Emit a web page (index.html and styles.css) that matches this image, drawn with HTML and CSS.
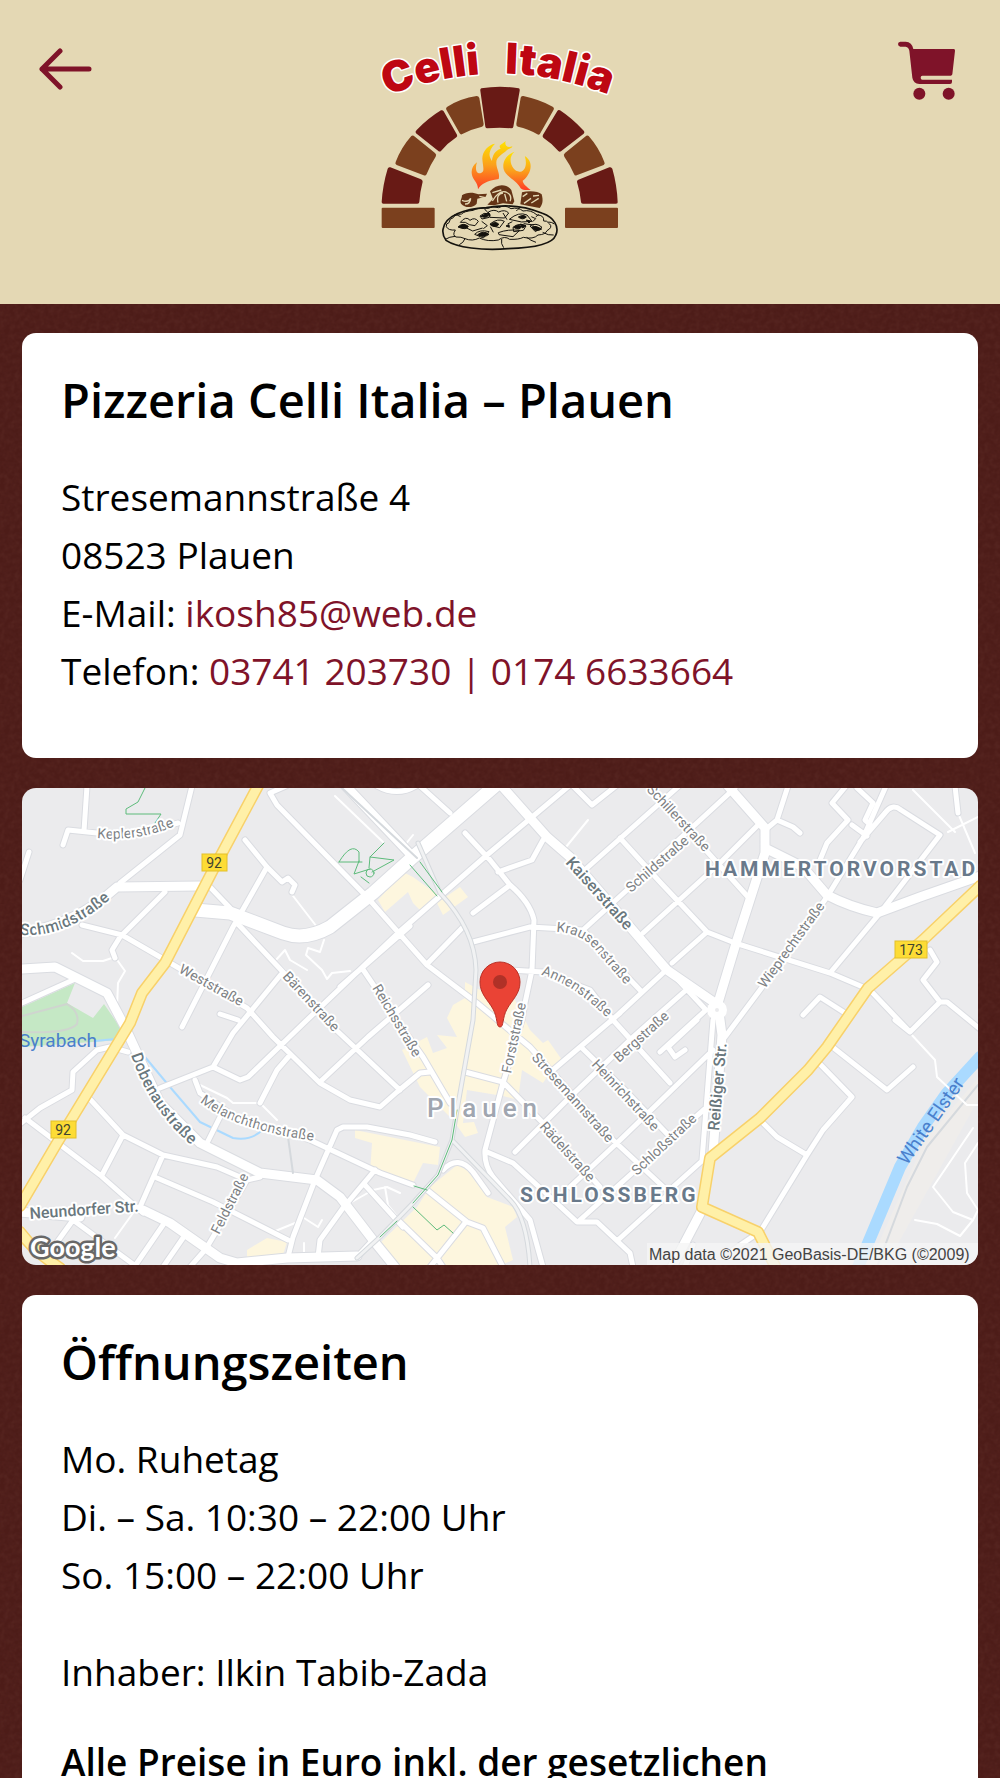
FILE: index.html
```html
<!DOCTYPE html>
<html lang="de">

<head>
    <meta charset="UTF-8" />
    <meta name="viewport" content="width=device-width, initial-scale=1.0" />
    <title>Pizzeria Celli Italia</title>
    <link rel="stylesheet" href="styles.css">
</head>

<body>
    <header class="header">
        <button class="icon-button" type="button" aria-label="Zurück">
            <svg width="54" height="44" viewBox="0 0 54 44">
                <path class="arrow" d="M51 21H4M22 3L4 21l18 18" />
            </svg>
        </button>

        <a class="logo" href="#" aria-label="Celli Italia">
            <svg width="280" height="250" viewBox="0 0 840 750">
                <defs>
                    <path id="arc" d="M82 228Q250 160 430 161Q600 161 820 252" />
                    <linearGradient id="fire" x1="0" y1="0" x2="0" y2="1">
                        <stop offset="0" stop-color="#ffe500" />
                        <stop offset=".5" stop-color="#fba01c" />
                        <stop offset="1" stop-color="#ff3d24" />
                    </linearGradient>
                </defs>
                <g class="logo-text">
                    <text><textPath href="#arc">Celli</textPath></text>
                    <text><textPath href="#arc" startOffset="362">Italia</textPath></text>
                </g>

                <!-- stones of the oven -->
                <g class="stone-red">
                    <path d="M364 205Q420 195 476 205Q480 206 479 212L460 320Q459 325 454 325Q420 322 382 325Q377 325 376 320L361 212Q360 207 364 205Z" />
                    <path d="M170 330Q205 294 243 271Q248 269 251 274L291 344Q293 349 289 352Q262 370 243 393Q239 396 235 393L168 340Q164 336 170 330Z" />
                    <path d="M669 330Q635 294 600 271Q595 268 592 273L549 344Q546 349 550 353Q577 371 595 393Q599 397 603 394L671 341Q676 336 669 330Z" />
                    <path d="M91 442L183 478Q188 480 188 485Q180 515 178 546Q178 551 172 551H70Q65 551 65 546Q68 495 83 446Q85 440 91 442Z" />
                    <path d="M748 442L655 479Q650 481 651 486Q660 515 663 546Q663 551 669 551H768Q774 551 773 546Q771 495 757 446Q754 440 748 442Z" />
                </g>
                <g class="stone-brown">
                    <path d="M262 260Q302 235 350 228Q356 228 358 234L371 312Q371 319 366 320Q335 327 307 342Q302 345 299 340L259 269Q256 263 262 260Z" />
                    <path d="M578 260Q538 238 490 228Q483 227 482 233L469 311Q468 318 474 320Q505 326 532 343Q537 346 540 341L581 269Q584 263 578 260Z" />
                    <path d="M154 348Q157 345 161 347L225 399Q231 404 227 410Q211 434 200 462Q198 468 191 466L110 435Q104 432 107 426Q123 383 154 348Z" />
                    <path d="M686 348Q683 345 679 347L615 399Q609 404 613 410Q630 434 642 462Q644 468 650 466L731 435Q736 432 733 426Q717 383 686 348Z" />
                    <rect x="65" y="563" width="159" height="61" rx="3" />
                    <rect x="615" y="563" width="159" height="61" rx="3" />
                </g>

                <!-- fire -->
                <g fill="url(#fire)">
                    <path d="M405 371C385 374 366 395 367 417C369 442 375 455 363 459C347 463 345 444 351 427C334 439 329 460 343 480C352 493 354 499 354 508C364 491 381 482 416 477C421 459 409 448 409 428C408 410 430 402 441 390C452 384 457 384 457 379C445 384 432 380 437 362C429 373 412 374 422 386C405 391 397 407 396 423C384 407 386 391 405 371Z" />
                    <path d="M464 395C438 404 426 426 431 448C436 470 469 478 482 505C490 512 500 510 512 510C502 501 490 494 488 482C507 468 521 438 505 418C499 410 493 406 495 410C501 431 497 452 481 455C458 458 438 415 464 395Z" />
                </g>

                <!-- logs -->
                <g class="log">
                    <path d="M306 526C317 516 341 516 355 523L381 521L377 530L352 536L350 551C340 564 314 565 304 552C298 544 306 536 306 526Z" />
                    <path d="M390 514C409 490 440 490 454 510L463 544L458 553L429 550L402 556L382 554L399 537Z" />
                    <path d="M486 517C506 512 535 513 545 523C550 541 548 555 539 564L503 557L481 553Z" />
                </g>
                <path class="log-line" d="M306 541q18 8 26 -6q-2 18-17 17M358 529l18 4M397 518l27-8M397 543q20-33 41-27q20 9 12 28M414 548q-6-26 15-29M434 522l6 22M488 530l14-10M492 550l21-15M514 549l22-14M519 528l18-2" />

                <!-- pizza -->
                <g class="pizza">
                    <path class="crust" d="M249 628C255 586 313 567 379 563C438 552 497 559 547 580C583 593 599 621 587 646C578 672 521 684 444 686C367 693 289 682 258 661C250 650 247 641 249 628Z" />
                    <path d="M259 620q6 12 27 10q-10 16 2 21q16-1 27 5q22 9 43-2q25 12 57 6q19-14 34-2q28 1 41-6q30 7 44-7q22-1 27-13q18-10 8-20q-9-12-18-9q2-18-20-18q-19-17-42-12q-14-12-36-7q-18-13-37-3q-19-6-32 2q-31-3-44 6q-29 3-35 11q-21 1-25 11q-12 2-13 15q-10 2-8 12M286 649q-18 1-30 9M315 656q-5 13-17 18M425 657q-3 15 6 26M500 652q12 10 28 15M548 637q17 10 33 8M302 590q-11-7-20-5M374 567q5 7 10 11M481 562q-9 7-12 11M536 583q-5 5-9 8M565 606q11 0 18 6" />
                    <path d="M301 607q17-21 29-6q14-11 25 3l-10 13q-20-1-29-10zM360 588q12-12 25-7l3 11-22 5zM385 576q18-10 31 0q19-9 30 3l-12 15-44-2zM390 612q24-19 43-8l-14 19-25-6zM448 598q28-24 53-13l15 19-31 2zM459 622q17-15 39-4l-8 13-29 4zM510 618q18-12 36 4l-20 13zM344 643q15-16 43-8l-17 19zM415 638q29-11 64-7l-20 19-42-6zM316 622l22 11 30-9M365 604l17 13-12 9M443 612l14-7M491 611l31 4M514 590l13 6-9 9M429 579l12 20M400 637l-9-17" />
                    <path class="topping" d="M294 621q15-15 31-2q-6 13-31 2zM363 589q10-10 21-2q-6 9-21 2zM391 614q14-12 25-2q-5 14-25 2zM475 591q16-9 24 0q-11 11-24 0zM461 622q10-10 25-3q-8 14-25 3zM515 621q12-6 30 6q-19 12-30-6zM353 644q18-14 34-1q-16 12-34 1zM481 612l17 5-10 7zM374 583l13-4 4 7zM438 618l9-4 1 8zM499 600l13 3-5 6z" />
                </g>
            </svg>
        </a>

        <button class="icon-button icon-button-right" type="button" aria-label="Warenkorb">
            <svg width="64" height="60" viewBox="114 58 192 180">
                <path class="cart" d="M121 63H137Q156 64 160 85H281Q286 85 285 90L277 161Q276 165 272 165H187Q182 165 182 171Q182 177 187 177H276V184Q276 190 270 190H178Q160 189 157 171L148 90Q146 79 137 78H121Q114 77 114 70Q114 64 121 63Z" />
                <circle class="cart" cx="178" cy="219" r="18" />
                <circle class="cart" cx="266" cy="219" r="18" />
            </svg>
        </button>
    </header>

    <main class="content">
        <section class="card">
            <h2>Pizzeria Celli Italia – Plauen</h2>
            <p>
                Stresemannstraße 4<br>
                08523 Plauen<br>
                E-Mail: <a href="mailto:ikosh85@web.de">ikosh85@web.de</a><br>
                Telefon: <a href="tel:03741203730">03741 203730 | 0174 6633664</a>
            </p>
        </section>

        <svg class="map" viewBox="22 788 956 477" role="img" aria-label="Karte von Plauen">
            <defs>
                <path id="minor" d="M87 786L84 831M63 845L68 830L97 833L143 833L178 823M192 786L180 835L120 883M29 852L20 880M165 892L120 937L112 950L115 958M82 925L122 935L160 957L247 1008L273 1037L320 1083L350 1100L380 1107L397 1092L420 1073L430 1072M245 840L267 867L282 882L288 878L295 885L292 892M267 867L233 927L182 1027M210 887L230 908L237 923L283 972L333 1027L400 1090M283 972L233 1033L213 1067L160 1088M213 1067L240 1080L248 1077L307 1020L398 933L487 855L569 786M286 786L270 793L277 805L367 897L427 965L477 1003L530 1047L613 1140L672 1195M20 1004L73 980M220 1014L238 1020M128 1052L110 1047L97 1050L73 1072L72 1090L40 1108L20 1124M25 1118L100 1175L143 1213M88 1097L123 1135L163 1155L217 1167L247 1180L260 1177M123 1135L102 1175M163 1155L140 1207M157 1178L213 1202L288 1240M288 1257L293 1237L315 1180L337 1130L343 1127L367 1127L410 1135L435 1142M195 1080L200 1093L240 1120L310 1140L380 1173L413 1185M427 1190L467 1222L483 1228L503 1267M340 987L410 926M321 1081L368 1037L428 985M290 1055L277 1070L260 1103M220 1117L207 1143M247 1180L207 1247M55 1245L73 1220L137 1267M163 1225L137 1263M183 1238L163 1267M205 1250L190 1267M318 1257L320 1240L343 1208L375 1170M420 786L450 813M377 786Q397 797 416 786M465 833L490 860L510 885Q530 902 534 920L532 970L525 1003L522 1020L503 1083L485 1150Q484 1165 493 1177L530 1220L543 1267M510 885L473 913M498 872L532 860L543 840M473 942L530 927L583 930L640 990M510 970L543 972L590 990L613 1020L670 1083M587 868L660 803L679 786M583 930L627 890L660 857L735 788M620 838L660 882L707 932L735 943L830 973L870 990L908 1030M643 933L720 863L760 823M672 963L707 932M610 1022L663 973M515 1152L567 1100L633 1037L685 991M553 1070L620 1013M570 1187L617 1143L713 1050M580 1220L660 1148L707 1107M582 1048L625 1090L672 1139M673 1187L703 1160M503 1082L543 1123L600 1187M487 1152L513 1163L550 1197L577 1222L597 1222L630 1253L633 1267M618 1240L672 1191M465 1072L503 1082M362 968L397 1020L423 1057L450 1103M428 963L463 927M443 1170Q458 1154 473 1172L488 1193M398 1220L437 1258L443 1267M465 1223L430 1267M403 1227L365 1185M373 1240L357 1257M788 786L777 820L765 830M777 820L793 827L800 833M846 786L832 803L848 820L827 843L820 860M886 786L863 838L827 897L760 990L725 1037M860 842L885 813Q892 803 901 810L940 835L880 913L830 973M857 788L873 803L865 820L873 827M852 825L867 836M573 786L592 805L616 786M703 847L748 897M803 1015L820 997L845 1013M930 950L937 962L923 980L940 1002L947 1002L980 1029M940 1002L910 1032L895 1020M955 786L958 813M830 1045L887 1090L913 1067M818 1062L852 1097L823 1130L807 1155L760 1232M760 1120L777 1137L807 1155M713 1020L702 1160M685 1050L675 1057L668 1047L697 1020M758 1233L733 1250M660 960L680 982L706 1010M706 1010L660 1052M685 1267L693 1245" />
                <path id="major" d="M20 933Q75 925 117 887L200 886M20 969L55 967L107 993L125 1027L160 1103L200 1143L260 1173L317 1180L340 1197L373 1240L395 1267M344 784L413 857M500 784L547 837L570 857L667 970L718 1005L722 1035L713 1153M728 786L765 828L765 853L737 940L718 1003M765 848L803 867L827 895Q850 907 877 913L920 897L980 876M702 1210L672 1267M143 1210L170 1223L220 1258L237 1263L287 1258L357 1256M20 1212L80 1217" />
                <path id="avenue" d="M195 910L230 913L283 933Q305 941 330 927L373 893L413 857L497 784" />
                <path id="trunk" d="M259 784L213 870L165 963L142 993L130 1023L57 1143L20 1206M20 1232Q35 1252 60 1268M980 886L923 940L868 988L827 1047L808 1070L760 1118L710 1158L702 1207L758 1232L776 1268" />
                <path id="rail" d="M418 843L440 893Q475 930 476 970L473 1020L457 1110L452 1140L438 1175L413 1203L380 1237L357 1258M452 1140L510 1200Q527 1217 530 1267" />

                <path id="kepler" d="M97 838Q137 842 175 826" />
                <path id="schmid" d="M20 935Q72 939 124 886" />
                <path id="dobenau" d="M131 1055Q151 1116 205 1156" />
                <path id="melanch" d="M200 1102Q235 1130 315 1141" />
                <path id="krausen" d="M556 932Q583 933 597 952L632 992" />
                <path id="annen" d="M541 975Q575 984 612 1023" />
            </defs>

            <rect class="land" x="22" y="788" width="956" height="477" />
            <path class="rail-land" d="M978 1078L925 1140L868 1267H885L978 1100Z" />
            <path class="park" d="M22 1007L75 983L67 1003L93 1018L104 1004L122 1030L120 1040L22 1047Z" />
            <path class="park-path" d="M22 1016L67 1004Q80 1012 77 1024Q68 1034 22 1032" />
            <path class="shops" d="M378 900L403 872L413 877L438 895L420 910L413 903L408 892L385 912ZM437 903L460 887L468 897L443 915ZM465 982L480 990L500 1003L515 1000L530 1030L543 1043L548 1040L562 1060L553 1068L543 1083L522 1070L518 1100L503 1096L497 1095L467 1090L463 1123L474 1122L478 1133L465 1137L453 1120L420 1087L402 1050L427 1037L433 1053L447 1048L437 1035L457 1037L447 1018L453 1005L465 998ZM355 1130L440 1147L438 1165L423 1163L413 1183L370 1173L372 1143L355 1138ZM457 1165L467 1170L487 1197L513 1207L517 1217L505 1227L513 1260L497 1267H397L380 1243L417 1207L430 1187ZM247 1250L267 1238L287 1242L283 1255L247 1258Z" />
            <path class="water river" d="M980 1057L947 1093L923 1127L900 1167L858 1267" />
            <path class="water brook" d="M95 1041L115 1039M145 1057L170 1087L200 1122L233 1138Q252 1141 262 1130" />
            <path class="rail-line" d="M978 1085L927 1147L907 1187L877 1267" />
            <path class="thin" d="M72 953L83 961L103 961L115 957L125 971L118 983L117 1007M317 927L290 892M200 1085L227 1098L233 1103L260 1103L277 1120M913 790L955 832M948 832L978 817M958 813L975 853M910 1033L935 1060L937 1077L967 1105L978 1105M973 1128L933 1187L953 1212L973 1220L978 1210M915 1220L937 1224L960 1236L973 1220M978 1143L965 1163L967 1193L978 1210M335 796L383 842M588 820L566 847M324 940L320 952L308 948L306 955L322 970L327 979L332 973L350 971M276 960L285 950L290 960L307 970M275 960L285 970M350 1203L373 1190L387 1187L400 1193M385 1187L388 1205L400 1220M405 845L413 835M133 1213L115 1238M273 1232L295 1223M304 1218L318 1227L322 1220M304 1243L304 1255" />

            <use class="minor casing" href="#minor" />
            <use class="major casing" href="#major" />
            <use class="avenue casing" href="#avenue" />
            <use class="minor" href="#minor" />
            <use class="major" href="#major" />
            <use class="avenue" href="#avenue" />
            <circle class="roundabout" cx="717" cy="1010" r="6" />
            <use class="rail casing" href="#rail" />
            <use class="rail" href="#rail" />
            <path class="rail-line" d="M342 788L417 858M288 1137L293 1173" />
            <use class="trunk casing-yellow" href="#trunk" />
            <use class="trunk" href="#trunk" />
            <path class="trail" d="M145 788L138 802L126 809L126 814L161 814L155 823M339 862Q351 842 359 852L359 862M339 862L362 862M384 843L370 857L394 860L372 872M370 857L369 868M359 861L354 874L370 869M361 877L369 883M410 865L437 896M420 862L442 892M457 1110L452 1140L438 1175L413 1203M397 1221L380 1237M414 1186L427 1190M413 1207L437 1230L444 1225L453 1233" />
            <circle class="trail" cx="370" cy="873" r="4" />

            <!-- street names -->
            <g class="street">
                <text><textPath href="#kepler">Keplerstraße</textPath></text>
                <text><textPath href="#melanch">Melanchthonstraße</textPath></text>
                <text><textPath href="#krausen">Krausenstraße</textPath></text>
                <text><textPath href="#annen">Annenstraße</textPath></text>
                <text transform="translate(178 972) rotate(29)">Weststraße</text>
                <text transform="translate(282 977) rotate(47)">Bärenstraße</text>
                <text transform="translate(372 988) rotate(59)">Reichsstraße</text>
                <text transform="translate(511 1074) rotate(-78)">Forststraße</text>
                <text transform="translate(531 1058) rotate(48)">Stresemannstraße</text>
                <text transform="translate(539 1127) rotate(48)">Rädelstraße</text>
                <text transform="translate(591 1065) rotate(47)">Heinrichstraße</text>
                <text transform="translate(619 1063) rotate(-42)">Bergstraße</text>
                <text transform="translate(637 1176) rotate(-43)">Schloßstraße</text>
                <text transform="translate(646 790) rotate(47)">Schillerstraße</text>
                <text transform="translate(631 893) rotate(-41)">Schildstraße</text>
                <text transform="translate(765 989) rotate(-54)">Wieprechtstraße</text>
                <text transform="translate(219 1235) rotate(-63)">Feldstraße</text>
            </g>
            <g class="street street-main">
                <text><textPath href="#schmid">Schmidstraße</textPath></text>
                <text><textPath href="#dobenau">Dobenaustraße</textPath></text>
                <text transform="translate(565 863) rotate(48)">Kaiserstraße</text>
                <text transform="translate(719 1131) rotate(-85)">Reißiger Str.</text>
                <text transform="translate(30 1219) rotate(-4)">Neundorfer Str.</text>
            </g>
            <g class="water-name">
                <text x="19" y="1047">Syrabach</text>
                <text transform="translate(907 1166) rotate(-55)">White Elster</text>
            </g>
            <text class="district" x="705" y="876">HAMMERTORVORSTAD</text>
            <text class="district" x="520" y="1202">SCHLOSSBERG</text>
            <text class="city" x="427" y="1117">Plauen</text>

            <g class="badge">
                <rect x="202" y="854" width="25" height="17" />
                <text x="214" y="868">92</text>
                <rect x="51" y="1121" width="25" height="17" />
                <text x="63" y="1135">92</text>
                <rect x="895" y="941" width="32" height="17" />
                <text x="911" y="955">173</text>
            </g>

            <path class="pin" d="M500 1027C496 1027 498 1018 493 1009C488 1000 480 994 480 982A20 20 0 0 1 520 982C520 994 512 1000 507 1009C502 1018 504 1027 500 1027Z" />
            <circle class="pin-dot" cx="500" cy="982" r="7" />

            <text class="google" x="30" y="1257">Google</text>
            <rect class="credit-back" x="647" y="1243" width="331" height="22" />
            <text class="credit" x="649" y="1260">Map data ©2021 GeoBasis-DE/BKG (©2009)</text>
        </svg>

        <section class="card">
            <h2>Öffnungszeiten</h2>
            <p>
                Mo. Ruhetag<br>
                Di. – Sa. 10:30 – 22:00 Uhr<br>
                So. 15:00 – 22:00 Uhr
            </p>
            <p>Inhaber: Ilkin Tabib-Zada</p>
            <h3>Alle Preise in Euro inkl. der gesetzlichen</h3>
        </section>
    </main>
</body>

</html>
```

FILE: styles.css
```css
* {
    box-sizing: border-box;
}

body {
    margin: 0;
    height: 100vh;
    overflow: hidden;
    background: #4d1c18;
    color: #000;
    font-family: "Open Sans", sans-serif;
    font-size: 37px;
    line-height: 58px;
}

a {
    color: #7f1329;
    text-decoration: none;
}

.header {
    display: grid;
    grid-template-columns: 1fr auto 1fr;
    align-items: start;
    padding: 20px 38px 34px;
    background: #e4d8b4;
}

.icon-button {
    display: flex;
    align-items: center;
    justify-self: start;
    height: 60px;
    margin: 20px 0 0;
    padding: 0;
    border: 0;
    background: none;
    cursor: pointer;
}

.icon-button-right {
    justify-self: end;
}

.arrow {
    fill: none;
    stroke: #7f1329;
    stroke-width: 5;
    stroke-linecap: round;
    stroke-linejoin: round;
}

.cart {
    fill: #7f1329;
}

/* logo */
.logo svg {
    display: block;
}

.logo-text {
    font-family: Inter, sans-serif;
    font-weight: 900;
    font-size: 128px;
    fill: #be0712;
    stroke: #fff;
    stroke-width: 9;
    stroke-linejoin: round;
    paint-order: stroke;
}

.stone-red {
    fill: #681a15;
}

.stone-brown {
    fill: #7b401e;
}

.log {
    fill: #653416;
}

.log-line {
    fill: none;
    stroke: #e4d8b4;
    stroke-width: 4;
}

.pizza {
    fill: none;
    stroke: #14120d;
    stroke-width: 3;
}

.pizza .crust {
    stroke-width: 5;
}

.pizza .topping {
    fill: #14120d;
}

/* cards */
.content {
    display: flex;
    flex-direction: column;
    gap: 30px;
    padding: 29px 22px;
    /* leather grain */
    background-image: url("data:image/svg+xml,%3Csvg xmlns='http://www.w3.org/2000/svg' width='200' height='200'%3E%3Cfilter id='n'%3E%3CfeTurbulence type='fractalNoise' baseFrequency='.2' numOctaves='2' stitchTiles='stitch'/%3E%3CfeColorMatrix values='0 0 0 0 .6 0 0 0 0 .3 0 0 0 0 .25 .12 0 0 0 -.04'/%3E%3C/filter%3E%3Crect width='200' height='200' filter='url(%23n)'/%3E%3C/svg%3E");
}

.card {
    padding: 39px 39px 19px;
    border-radius: 14px;
    background: #fff;
}

h2,
h3,
p {
    margin: 0 0 39px;
}

h2 {
    margin-bottom: 40px;
    font-size: 47px;
    font-weight: 600;
    line-height: 56px;
}

h3 {
    font-size: 37px;
    font-weight: 600;
    line-height: 44px;
}

/* map */
.map {
    display: block;
    width: 100%;
    border-radius: 14px;
    font-family: Roboto, sans-serif;
}

.land {
    fill: #ebebed;
}

.rail-land {
    fill: #efedeb;
}

.park {
    fill: #c5e8c5;
}

.shops {
    fill: #fdf6de;
}

.park-path,
.water,
.thin,
.minor,
.major,
.avenue,
.rail,
.rail-line,
.trunk,
.trail {
    fill: none;
    stroke: #fff;
    stroke-linejoin: round;
    stroke-linecap: round;
}

.park-path {
    stroke: #cfd5cf;
    stroke-width: 2;
}

.water {
    stroke: #aadaff;
}

.river {
    stroke-width: 12;
}

.brook {
    stroke-width: 2;
}

.thin {
    stroke-width: 2;
}

.minor {
    stroke-width: 5;
}

.major {
    stroke-width: 9;
}

.avenue {
    stroke-width: 13;
}

.casing {
    stroke: #dadce1;
}

.minor.casing {
    stroke-width: 7;
}

.major.casing {
    stroke-width: 11;
}

.avenue.casing {
    stroke-width: 15;
}

.rail {
    stroke: #f1f2f3;
    stroke-width: 3;
}

.rail.casing {
    stroke: #d5d9dd;
    stroke-width: 5;
}

.rail-line {
    stroke: #d5d9dd;
    stroke-width: 2;
}

.trunk {
    stroke: #fff0a8;
    stroke-width: 9;
}

.trunk.casing-yellow {
    stroke: #f8d16a;
    stroke-width: 12;
}

.roundabout {
    fill: #ebebed;
    stroke: #fff;
    stroke-width: 8;
}

.trail {
    stroke: #5dbb7b;
    stroke-width: 1;
}

.street {
    font-size: 14px;
    fill: #7d8184;
}

.street-main {
    font-size: 16px;
    font-weight: 500;
    fill: #69777d;
}

.street text,
.district,
.city {
    stroke: #fff;
    stroke-width: 4;
    stroke-linejoin: round;
    paint-order: stroke;
}

.water-name {
    font-size: 19px;
    fill: #4a80cc;
}

.district {
    font-size: 21px;
    font-weight: 700;
    letter-spacing: 3px;
    fill: #69798a;
}

.city {
    font-size: 26px;
    font-weight: 500;
    letter-spacing: 6px;
    fill: #a0a6b0;
}

.badge rect {
    fill: #fddc35;
    stroke: #e3c02b;
}

.badge text {
    font-size: 14px;
    text-anchor: middle;
    fill: #40432f;
}

.pin {
    fill: #ea4335;
    stroke: #b93026;
}

.pin-dot {
    fill: #b03127;
}

.google {
    font-family: Lato, sans-serif;
    font-size: 27px;
    font-weight: 700;
    fill: #fff;
    stroke: #686868;
    stroke-width: 5;
    stroke-linejoin: round;
    paint-order: stroke;
}

.credit-back {
    fill: #f5f5f5;
    fill-opacity: 0.8;
}

.credit {
    font-family: "Liberation Sans", sans-serif;
    font-size: 16px;
    fill: #444;
}
```
